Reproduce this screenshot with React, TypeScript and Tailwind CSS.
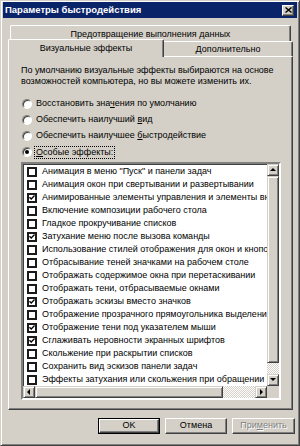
import React from "react";

const ITEMS: { label: string; checked: boolean }[] = [
  { label: "Анимация в меню \"Пуск\" и панели задач", checked: false },
  { label: "Анимация окон при свертывании и развертывании", checked: false },
  { label: "Анимированные элементы управления и элементы внутри окна", checked: true },
  { label: "Включение композиции рабочего стола", checked: false },
  { label: "Гладкое прокручивание списков", checked: false },
  { label: "Затухание меню после вызова команды", checked: true },
  { label: "Использование стилей отображения для окон и кнопок", checked: false },
  { label: "Отбрасывание теней значками на рабочем столе", checked: false },
  { label: "Отображать содержимое окна при перетаскивании", checked: false },
  { label: "Отображать тени, отбрасываемые окнами", checked: false },
  { label: "Отображать эскизы вместо значков", checked: true },
  { label: "Отображение прозрачного прямоугольника выделения", checked: false },
  { label: "Отображение тени под указателем мыши", checked: true },
  { label: "Сглаживать неровности экранных шрифтов", checked: true },
  { label: "Скольжение при раскрытии списков", checked: false },
  { label: "Сохранить вид эскизов панели задач", checked: false },
  { label: "Эффекты затухания или скольжения при обращении к меню", checked: false },
];

function Arrow({ dir }: { dir: "up" | "down" | "left" | "right" }) {
  const pts = {
    up: "1,5 7,5 4,2",
    down: "1,2 7,2 4,5",
    left: "5,1 5,7 2,4",
    right: "3,1 3,7 6,4",
  }[dir];
  return (
    <svg width="8" height="8" viewBox="0 0 8 8">
      <polygon points={pts} fill="#000" />
    </svg>
  );
}

function ScrollBtn({ dir }: { dir: "up" | "down" | "left" | "right" }) {
  return (
    <div className="flex h-[12px] w-[12px] shrink-0 items-center justify-center border border-t-[#d4d0c8] border-l-[#d4d0c8] border-r-[#404040] border-b-[#404040] bg-[#d4d0c8] shadow-[inset_1px_1px_0_#fff,inset_-1px_-1px_0_#808080]">
      <Arrow dir={dir} />
    </div>
  );
}

function Radio({ label, on }: { label: [string, string, string]; on?: boolean }) {
  return (
    <div className="flex h-[16px] items-center">
      <div className="flex h-[10px] w-[10px] items-center justify-center rounded-full border border-t-[#808080] border-l-[#808080] border-r-white border-b-white bg-white shadow-[inset_1px_1px_0_#404040]">
        {on && <div className="h-[4px] w-[4px] rounded-full bg-black" />}
      </div>
      <span className={on ? "ml-[2px] border border-dotted border-black px-[1px] leading-[11px]" : "ml-[3px] px-[1px]"}>
        {label[0]}
        <span className="underline underline-offset-1">{label[1]}</span>
        {label[2]}
      </span>
    </div>
  );
}

export default function App() {
  return (
    <div className="flex h-[446px] w-[300px] flex-col overflow-hidden border border-t-[#d4d0c8] border-l-[#d4d0c8] border-r-[#404040] border-b-[#404040] bg-[#d4d0c8] font-['Liberation_Sans',sans-serif] text-[9px] text-black shadow-[inset_1px_1px_0_#fff,inset_-1px_-1px_0_#808080]">
      {/* title bar */}
      <div className="mx-[2px] mt-[1px] flex h-[16px] shrink-0 items-center justify-between bg-[#0a246a] pl-[2px] pr-[3px]">
        <span className="text-[9.5px] font-bold text-white">Параметры быстродействия</span>
        <div className="flex h-[11px] w-[12px] items-center justify-center border border-t-white border-l-white border-r-[#404040] border-b-[#404040] bg-[#d4d0c8] shadow-[inset_-1px_-1px_0_#808080]">
          <svg width="7" height="6" viewBox="0 0 7 6">
            <path d="M0.5 0.5 L6.5 5.5 M6.5 0.5 L0.5 5.5" stroke="#000" strokeWidth="1.4" />
          </svg>
        </div>
      </div>

      {/* tabs */}
      <div className="mt-[7px] pl-[9px]">
        <div className="flex h-[16px] w-[281px] items-start justify-center rounded-t-[2px] border border-b-0 border-t-white border-l-white border-r-[#404040] pt-[2px] shadow-[inset_-1px_0_0_#808080]">
          Предотвращение выполнения данных
        </div>
      </div>
      <div className="relative z-10 -mt-[2px] flex items-end pl-[7px]">
        <div className="-mb-[1px] flex h-[18px] w-[156px] items-start justify-center rounded-t-[2px] border border-b-0 border-t-white border-l-white border-r-[#404040] bg-[#d4d0c8] pt-[2px] shadow-[inset_-1px_0_0_#808080]">
          Визуальные эффекты
        </div>
        <div className="flex h-[15px] w-[129px] items-center justify-center rounded-tr-[2px] border border-b-0 border-l-0 border-t-white border-r-[#404040] bg-[#d4d0c8] pt-[2px] shadow-[inset_-1px_0_0_#808080]">
          Дополнительно
        </div>
      </div>

      {/* panel */}
      <div className="ml-[7px] flex h-[354px] w-[285px] flex-col border border-t-white border-l-white border-r-[#404040] border-b-[#404040] pl-[12px] pt-[8px] shadow-[inset_-1px_-1px_0_#808080]">
        <p className="leading-[10.5px]">
          По умолчанию визуальные эффекты выбираются на основе
          <br />
          возможностей компьютера, но вы можете изменить их.
        </p>
        <div className="mt-[10px] flex flex-col pl-[1px]">
          <Radio label={["Восстановить зна", "ч", "ения по умолчанию"]} />
          <Radio label={["Обеспечить наилучший ", "в", "ид"]} />
          <Radio label={["Обеспечить наилучшее ", "б", "ыстродействие"]} />
          <Radio label={["", "О", "собые эффекты:"]} on />
        </div>

        {/* list box */}
        <div className="mt-[2px] flex h-[238px] w-[260px] flex-col border-2 border-t-[#808080] border-l-[#808080] border-r-white border-b-white bg-white shadow-[inset_1px_1px_0_#404040]">
          <div className="flex h-[222px]">
            <div className="flex min-w-0 flex-1 flex-col overflow-hidden pl-[4px] pt-[1px]">
              {ITEMS.map((it) => (
                <div key={it.label} className="flex h-[13px] shrink-0 items-center whitespace-nowrap">
                  <div className="flex h-[10px] w-[10px] shrink-0 items-center justify-center border-2 border-[#1a1a1a] bg-white">
                    {it.checked && (
                      <svg width="7" height="7" viewBox="0 0 7 7">
                        <path d="M0.5 3.2 L2.6 5.3 L6.5 1.2" stroke="#000" strokeWidth="1.6" fill="none" />
                      </svg>
                    )}
                  </div>
                  <span className="ml-[5px]">{it.label}</span>
                </div>
              ))}
            </div>
            <div className="flex w-[12px] shrink-0 flex-col">
              <ScrollBtn dir="up" />
              <div className="h-[187px] border border-t-[#d4d0c8] border-l-[#d4d0c8] border-r-[#404040] border-b-[#404040] bg-[#d4d0c8] shadow-[inset_1px_1px_0_#fff,inset_-1px_-1px_0_#808080]" />
              <div className="flex-1 bg-[repeating-conic-gradient(#fff_0_25%,#d4d0c8_0_50%)] bg-[length:2px_2px]" />
              <ScrollBtn dir="down" />
            </div>
          </div>
          <div className="flex h-[12px]">
            <ScrollBtn dir="left" />
            <div className="w-[188px] border border-t-[#d4d0c8] border-l-[#d4d0c8] border-r-[#404040] border-b-[#404040] bg-[#d4d0c8] shadow-[inset_1px_1px_0_#fff,inset_-1px_-1px_0_#808080]" />
            <div className="flex-1 bg-[repeating-conic-gradient(#fff_0_25%,#d4d0c8_0_50%)] bg-[length:2px_2px]" />
            <ScrollBtn dir="right" />
            <div className="w-[12px] bg-[#d4d0c8]" />
          </div>
        </div>
      </div>

      {/* buttons */}
      <div className="mt-[8px] flex gap-[5px] pl-[97px]">
        <div className="h-[16px] w-[62px] border border-black">
          <div className="flex h-full w-full items-center justify-center border border-t-white border-l-white border-r-[#404040] border-b-[#404040] shadow-[inset_-1px_-1px_0_#808080]">
            OK
          </div>
        </div>
        <div className="flex h-[16px] w-[62px] items-center justify-center border border-t-white border-l-white border-r-[#404040] border-b-[#404040] shadow-[inset_-1px_-1px_0_#808080]">
          Отмена
        </div>
        <div className="flex h-[16px] w-[63px] items-center justify-center border border-t-white border-l-white border-r-[#404040] border-b-[#404040] text-[#808080] shadow-[inset_-1px_-1px_0_#808080] [text-shadow:1px_1px_0_#fff]">
          При<span className="underline underline-offset-1">м</span>енить
        </div>
      </div>
    </div>
  );
}
